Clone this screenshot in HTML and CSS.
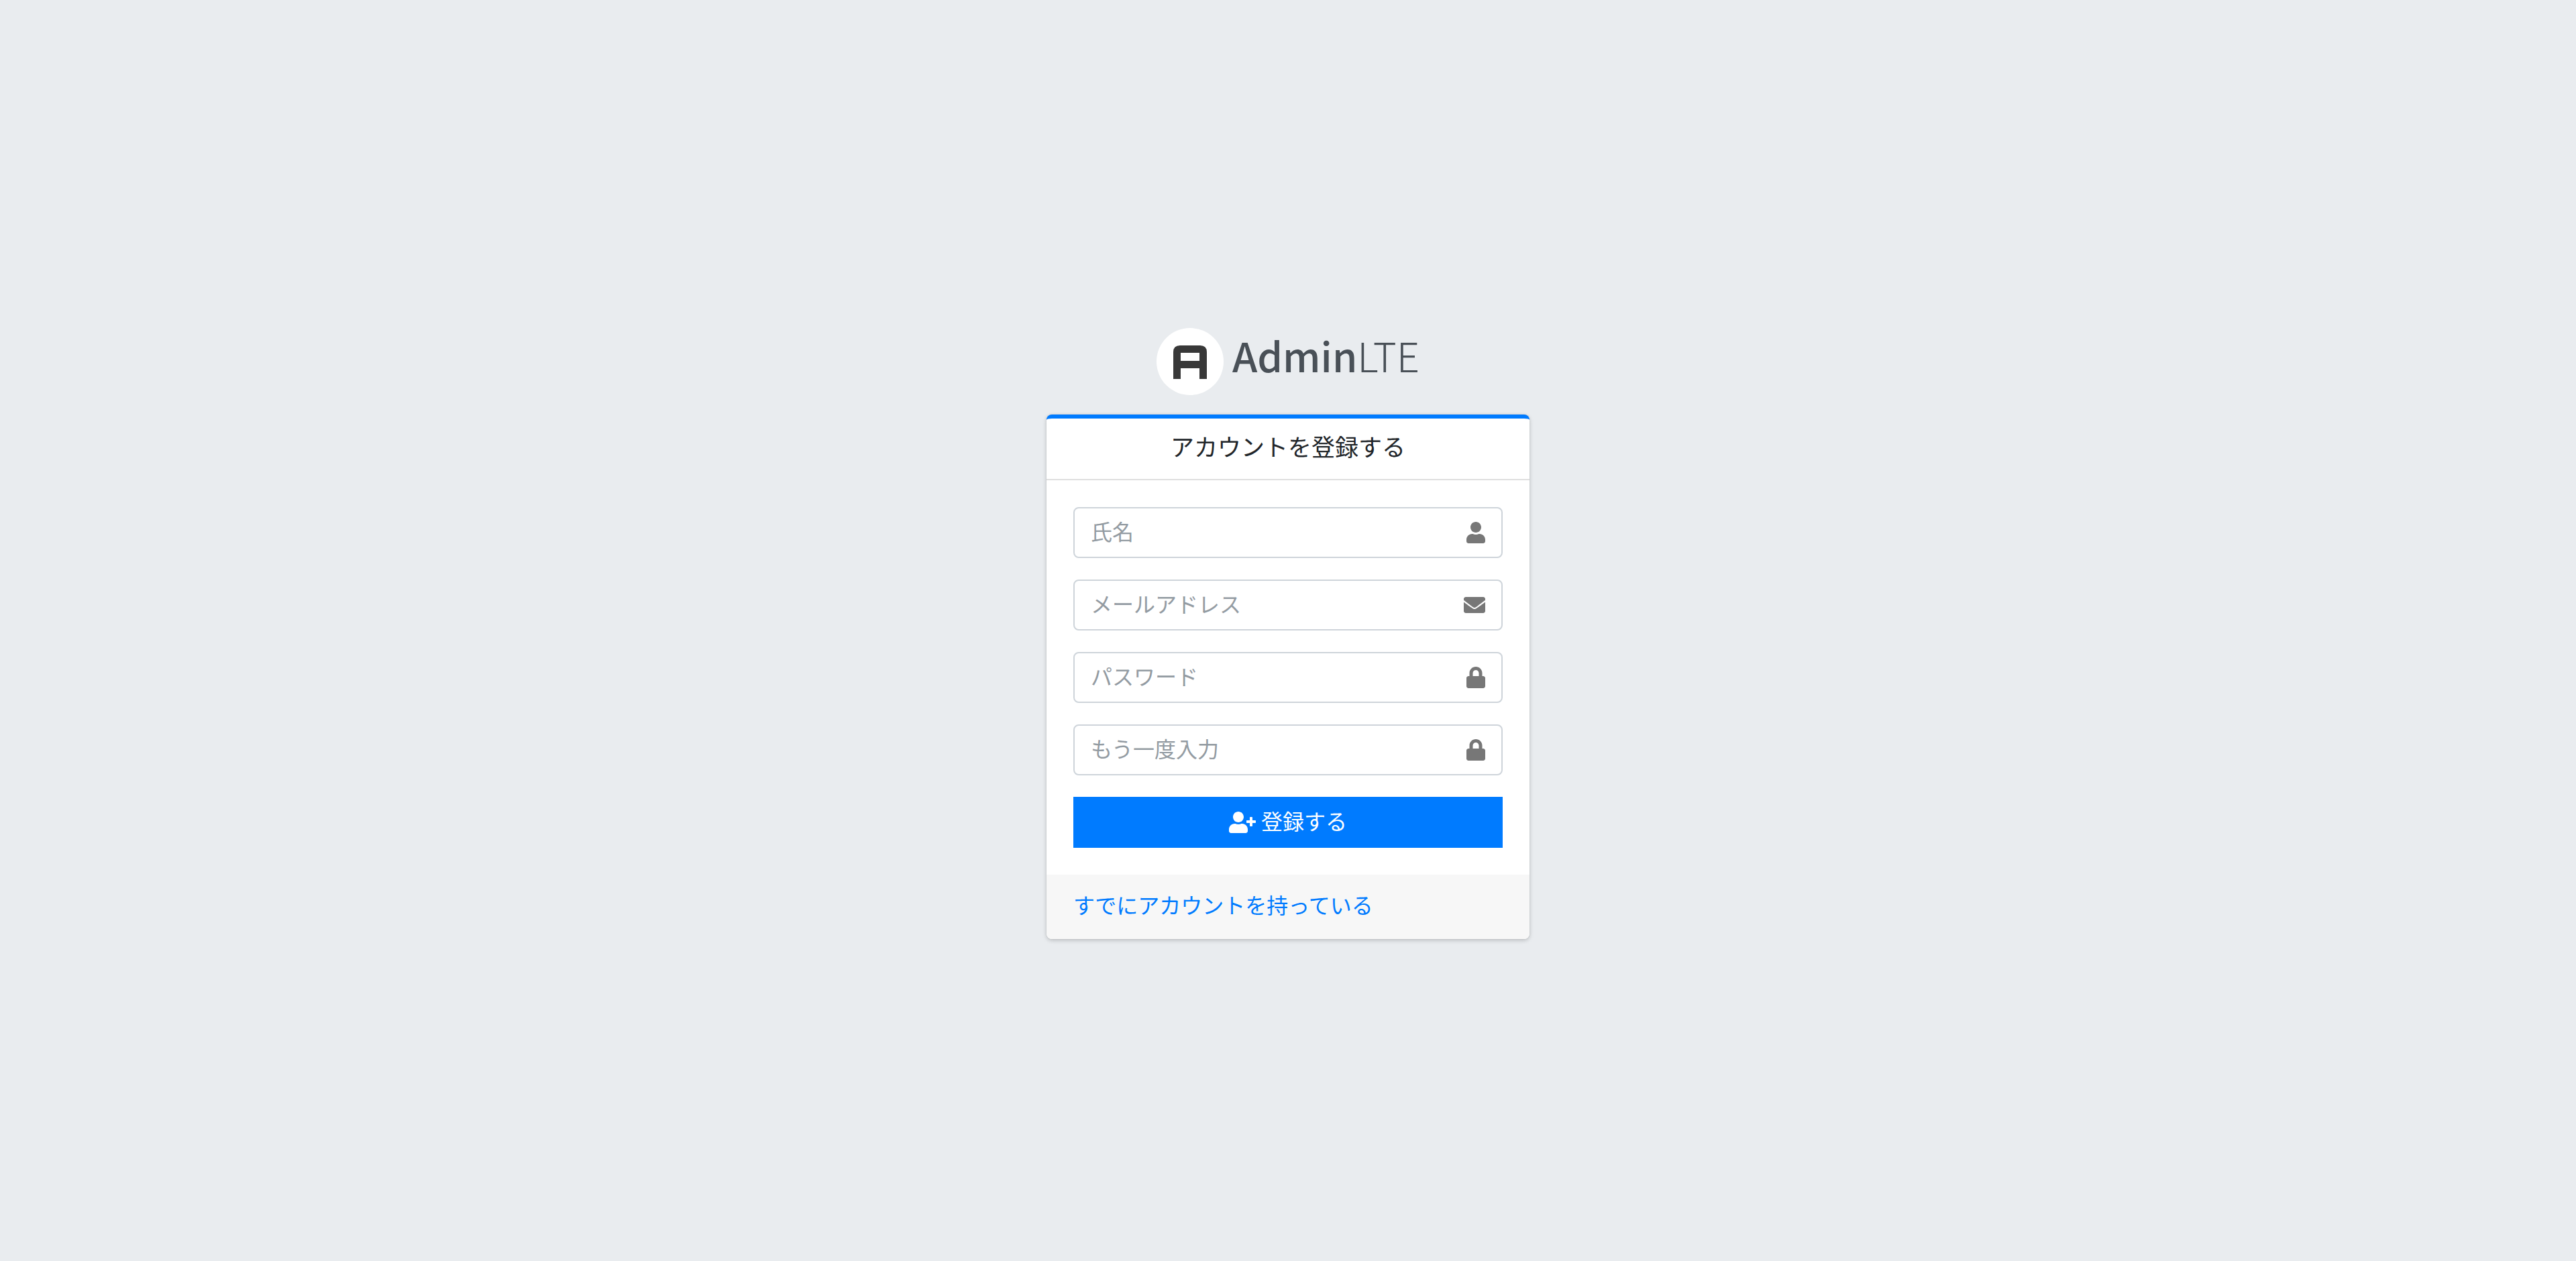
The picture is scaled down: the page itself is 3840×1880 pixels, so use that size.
FILE: index.html
```html
<!DOCTYPE html>
<html lang="ja">
<head>
    <meta charset="UTF-8">
    <meta name="viewport" content="width=device-width, initial-scale=1.0">
    <title>AdminLTE</title>
    <link rel="stylesheet" href="styles.css">
</head>
<body class="register-page">
    <main class="register-box">
        <div class="register-logo">
            <a href="#">
                <svg class="logo-img" viewBox="0 0 100 100" aria-hidden="true">
                    <circle cx="50" cy="50" r="50" fill="#fff"/>
                    <path fill="#383838" fill-rule="evenodd" d="M25 76V36Q25 26 35 26H65Q75 26 75 36V76H64V60H36V76ZM36 37V49H64V37Z"/>
                </svg>
                <span class="logo-text"><b>Admin</b>LTE</span>
            </a>
        </div>

        <div class="card">
            <div class="card-header">
                <h3 class="card-title">アカウントを登録する</h3>
            </div>

            <div class="card-body">
                <form action="#" method="post">
                    <div class="input-group">
                        <input type="text" name="name" placeholder="氏名" aria-label="氏名">
                        <svg class="icon" viewBox="0 0 448 512" aria-hidden="true"><path d="M224 256c70.7 0 128-57.3 128-128S294.7 0 224 0 96 57.3 96 128s57.3 128 128 128zm89.6 32h-16.7c-22.2 10.2-46.9 16-72.9 16s-50.6-5.8-72.9-16h-16.7C60.2 288 0 348.2 0 422.4V464c0 26.5 21.5 48 48 48h352c26.5 0 48-21.5 48-48v-41.6c0-74.2-60.2-134.4-134.4-134.4z"/></svg>
                    </div>

                    <div class="input-group">
                        <input type="email" name="email" placeholder="メールアドレス" aria-label="メールアドレス">
                        <svg class="icon" viewBox="0 0 512 512" aria-hidden="true"><path d="M502.3 190.8c3.9-3.1 9.7-.2 9.7 4.7V400c0 26.5-21.5 48-48 48H48c-26.5 0-48-21.5-48-48V195.6c0-5 5.7-7.8 9.7-4.7 22.4 17.4 52.1 39.5 154.1 113.6 21.1 15.4 56.7 47.8 92.2 47.6 35.7.3 72-32.8 92.3-47.6 102-74.1 131.6-96.3 154-113.7zM256 320c23.2.4 56.6-29.2 73.4-41.4 132.7-96.3 142.8-104.7 173.4-128.7 5.8-4.5 9.2-11.5 9.2-18.9v-19c0-26.5-21.5-48-48-48H48c-26.5 0-48 21.5-48 48v19c0 7.4 3.4 14.3 9.2 18.9 30.6 23.9 40.7 32.4 173.4 128.7 16.8 12.2 50.2 41.8 73.4 41.4z"/></svg>
                    </div>

                    <div class="input-group">
                        <input type="password" name="password" placeholder="パスワード" aria-label="パスワード">
                        <svg class="icon" viewBox="0 0 448 512" aria-hidden="true"><path d="M400 224h-24v-72C376 68.2 307.8 0 224 0S72 68.2 72 152v72H48c-26.5 0-48 21.5-48 48v192c0 26.5 21.5 48 48 48h352c26.5 0 48-21.5 48-48V272c0-26.5-21.5-48-48-48zm-104 0H152v-72c0-39.7 32.3-72 72-72s72 32.3 72 72v72z"/></svg>
                    </div>

                    <div class="input-group">
                        <input type="password" name="password_confirmation" placeholder="もう一度入力" aria-label="もう一度入力">
                        <svg class="icon" viewBox="0 0 448 512" aria-hidden="true"><path d="M400 224h-24v-72C376 68.2 307.8 0 224 0S72 68.2 72 152v72H48c-26.5 0-48 21.5-48 48v192c0 26.5 21.5 48 48 48h352c26.5 0 48-21.5 48-48V272c0-26.5-21.5-48-48-48zm-104 0H152v-72c0-39.7 32.3-72 72-72s72 32.3 72 72v72z"/></svg>
                    </div>

                    <button type="submit" class="btn-primary">
                        <svg class="icon" viewBox="0 0 640 512" aria-hidden="true"><path d="M624 208h-64v-64c0-8.8-7.2-16-16-16h-32c-8.8 0-16 7.2-16 16v64h-64c-8.8 0-16 7.2-16 16v32c0 8.8 7.2 16 16 16h64v64c0 8.8 7.2 16 16 16h32c8.8 0 16-7.2 16-16v-64h64c8.8 0 16-7.2 16-16v-32c0-8.8-7.2-16-16-16zm-400 48c70.7 0 128-57.3 128-128S294.7 0 224 0 96 57.3 96 128s57.3 128 128 128zm89.6 32h-16.7c-22.2 10.2-46.9 16-72.9 16s-50.6-5.8-72.9-16h-16.7C60.2 288 0 348.2 0 422.4V464c0 26.5 21.5 48 48 48h352c26.5 0 48-21.5 48-48v-41.6c0-74.2-60.2-134.4-134.4-134.4z"/></svg>
                        <span>登録する</span>
                    </button>
                </form>
            </div>

            <div class="card-footer">
                <a href="#">すでにアカウントを持っている</a>
            </div>
        </div>
    </main>
</body>
</html>
```
FILE: styles.css
```css
* {
    box-sizing: border-box;
}
body {
    margin: 0;
    font-family: "Noto Sans CJK JP", sans-serif;
    font-size: 32px;
    line-height: 48px;
    color: #212529;
}
a {
    color: #007bff;
    text-decoration: none;
}
.register-page {
    display: flex;
    align-items: center;
    justify-content: center;
    min-height: 100vh;
    background-color: #e9ecef;
}
.register-box {
    width: 90%;
    max-width: 720px;
}
.register-logo {
    padding-top: 8px;
    margin-bottom: 29px;
}
.register-logo a {
    display: flex;
    justify-content: center;
    gap: 13px;
    color: #495057;
}
.logo-img {
    width: 100px;
    height: 100px;
}
.logo-text {
    font-size: 60px;
    font-weight: 300;
    line-height: 80px;
}
.logo-text b {
    font-weight: 500;
}
.card {
    background-color: #fff;
    border-top: 6px solid #007bff;
    border-radius: 8px;
    box-shadow: 0 0 2px rgba(0, 0, 0, .125), 0 2px 6px rgba(0, 0, 0, .2);
}
.card-header {
    padding: 20px 40px 28px;
    border-bottom: 2px solid rgba(0, 0, 0, .125);
}
.card-title {
    margin: 0;
    font-size: 35px;
    font-weight: 400;
    line-height: 42px;
    text-align: center;
}
.card-body {
    padding: 40px;
}
.input-group {
    display: flex;
    align-items: center;
    height: 76px;
    margin-bottom: 32px;
    padding: 0 24px;
    border: 2px solid #ced4da;
    border-radius: 8px;
}
.input-group:focus-within {
    border-color: #80bdff;
}
.input-group input {
    flex: 1;
    min-width: 0;
    padding: 0 0 6px;
    border: none;
    outline: none;
    background: none;
    font: inherit;
    color: #495057;
}
.input-group input::placeholder {
    color: #939ba2;
}
.icon {
    height: 32px;
    fill: currentColor;
}
.input-group .icon {
    color: #777;
}
.btn-primary {
    display: flex;
    align-items: center;
    justify-content: center;
    gap: 8px;
    width: 100%;
    height: 76px;
    padding: 0 24px;
    border: none;
    background-color: #007bff;
    color: #fff;
    font: inherit;
    cursor: pointer;
}
.btn-primary span {
    padding-bottom: 6px;
}
.btn-primary:hover {
    background-color: #0069d9;
}
.card-footer {
    padding: 20px 40px 28px;
    border-radius: 0 0 8px 8px;
    background-color: #f7f7f7;
}
```
